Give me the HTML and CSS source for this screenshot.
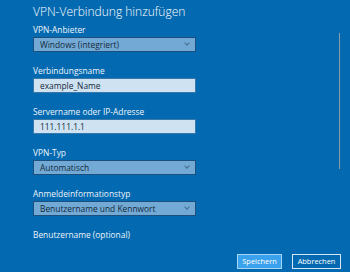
FILE: index.html
```html
<!DOCTYPE html>
<html lang="de">
<head>
  <meta charset="UTF-8" />
  <meta name="viewport" content="width=device-width, initial-scale=1.0" />
  <title>VPN-Verbindung hinzufügen</title>
  <link rel="stylesheet" href="styles.css">
</head>
<body>
  <div class="panel">
    <h1>VPN-Verbindung hinzufügen</h1>

    <div class="field">
      <label>VPN-Anbieter</label>
      <div class="select">Windows (integriert)</div>
    </div>

    <div class="field">
      <label for="name">Verbindungsname</label>
      <input type="text" id="name" value="example_Name" />
    </div>

    <div class="field">
      <label for="server">Servername oder IP-Adresse</label>
      <input type="text" id="server" value="111.111.1.1" />
    </div>

    <div class="field">
      <label>VPN-Typ</label>
      <div class="select">Automatisch</div>
    </div>

    <div class="field">
      <label>Anmeldeinformationstyp</label>
      <div class="select">Benutzername und Kennwort</div>
    </div>

    <div class="field">
      <label>Benutzername (optional)</label>
    </div>

    <div class="actions">
      <button class="primary">Speichern</button>
      <button class="cancel">Abbrechen</button>
    </div>

    <div class="scrollbar"></div>
  </div>
</body>
</html>
```

FILE: styles.css
```css
body {
  margin: 0;
  background-color: #0369b0;
  font-family: 'Open Sans', 'Noto Sans', sans-serif;
  color: #eef4fa;
}
.panel {
  position: relative;
  width: 350px;
  height: 272px;
  box-sizing: border-box;
  padding: 3px 9px 0 33px;
}
h1 {
  margin: 0 0 3px;
  font-size: 12px;
  line-height: 18px;
  font-weight: 300;
  color: #ffffff;
}
.field {
  margin-bottom: 13px;
}
label {
  display: block;
  font-size: 8.4px;
  line-height: 12px;
  margin-bottom: 1px;
}
.select,
input {
  display: block;
  width: 163px;
  height: 15px;
  box-sizing: border-box;
  margin: 0;
  padding: 0 6px;
  font-family: inherit;
  font-size: 8.4px;
  line-height: 13px;
  color: #15293b;
  outline: none;
}
.select {
  position: relative;
  background-color: #72aad5;
  border: 1px solid #1c4f7c;
}
.select::after {
  content: '';
  position: absolute;
  right: 6px;
  top: 3px;
  width: 3px;
  height: 3px;
  border-right: 1px solid #476f91;
  border-bottom: 1px solid #476f91;
  transform: rotate(45deg);
}
input {
  background-color: #cfe2f1;
  border: 1px solid #3b78aa;
}
.actions {
  display: flex;
  justify-content: flex-end;
  gap: 10px;
  margin-top: 3px;
}
button {
  width: 49px;
  height: 15px;
  padding: 0;
  font-family: inherit;
  font-size: 7.4px;
  line-height: 13px;
  color: #ffffff;
  background-color: #0369b0;
  border: 1px solid #d6e6f3;
}
button.primary {
  width: 45px;
  background-color: #3aa2ec;
  border-color: #a5d6f7;
}
.scrollbar {
  position: absolute;
  left: 339px;
  top: 33px;
  width: 1px;
  height: 136px;
  background-color: #8d9aa6;
}
```
